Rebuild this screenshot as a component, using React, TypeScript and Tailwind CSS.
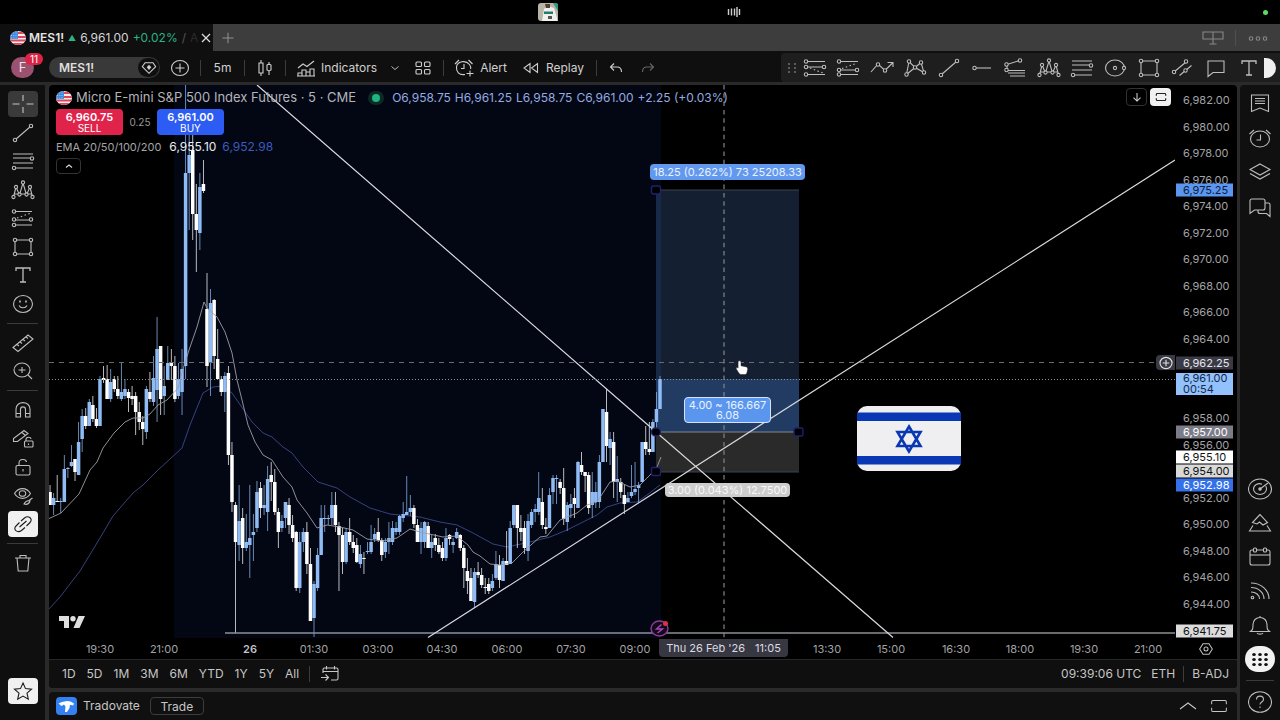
import type { ReactNode } from "react";

// [high, body top, body bottom, low, rising] in plot coordinates, one per 5 minute bar
type Bar = [number, number, number, number, 0 | 1];

const BAR_START = 50;
const BAR_STEP = 3.567;

const BARS: Bar[] = [
  [485, 492, 505, 505, 0], [493, 498, 505, 515, 1], [475, 501, 502, 502, 0], [498, 501, 502, 513, 1],
  [455, 469, 502, 502, 1], [467, 468, 469, 478, 1], [445, 462, 466, 467, 1], [459, 459, 472, 481, 0],
  [422, 442, 475, 475, 1], [409, 416, 439, 452, 1], [408, 416, 426, 429, 0], [399, 402, 426, 426, 1],
  [396, 405, 419, 422, 0], [408, 419, 426, 428, 0], [376, 379, 426, 426, 1], [366, 378, 380, 383, 0],
  [365, 379, 399, 399, 0], [369, 382, 399, 402, 1], [376, 379, 389, 392, 0], [376, 389, 396, 399, 0],
  [363, 392, 399, 401, 1], [379, 389, 396, 399, 1], [389, 392, 398, 412, 0], [386, 396, 399, 405, 0],
  [392, 396, 412, 435, 0], [402, 412, 422, 430, 0], [416, 422, 429, 445, 0], [386, 389, 432, 439, 1],
  [372, 392, 399, 402, 0], [356, 378, 402, 406, 1], [317, 349, 390, 422, 1], [346, 346, 399, 415, 0],
  [366, 386, 396, 415, 1], [346, 363, 380, 380, 1], [349, 363, 366, 380, 0], [356, 366, 399, 402, 0],
  [363, 379, 396, 399, 1], [349, 369, 392, 415, 1], [85, 173, 366, 379, 1], [135, 155, 173, 230, 1],
  [135, 150, 214, 240, 0], [184, 214, 230, 272, 0], [173, 187, 233, 250, 1], [160, 184, 191, 193, 0],
  [273, 309, 366, 387, 0], [289, 303, 363, 396, 1], [299, 300, 356, 369, 0], [329, 359, 379, 379, 0],
  [376, 379, 392, 396, 0], [372, 376, 392, 412, 1], [366, 373, 455, 465, 0], [442, 455, 502, 512, 0],
  [502, 505, 542, 633, 0], [485, 521, 545, 561, 1], [508, 518, 548, 564, 0], [514, 542, 548, 551, 1],
  [485, 538, 545, 578, 1], [514, 532, 535, 561, 1], [481, 492, 528, 532, 1], [482, 488, 508, 518, 0],
  [485, 505, 508, 515, 1], [466, 479, 512, 531, 1], [462, 475, 482, 501, 0], [469, 482, 512, 515, 0],
  [508, 512, 532, 548, 0], [515, 521, 528, 532, 1], [502, 502, 518, 528, 1], [498, 505, 525, 534, 0],
  [515, 525, 538, 542, 0], [531, 532, 588, 591, 0], [532, 542, 588, 593, 1], [528, 532, 542, 552, 1],
  [522, 532, 564, 574, 0], [548, 564, 621, 621, 0], [581, 584, 618, 637, 1], [548, 555, 588, 591, 1],
  [505, 518, 555, 555, 1], [505, 518, 519, 532, 1], [515, 518, 519, 525, 1], [492, 505, 518, 525, 1],
  [492, 505, 525, 532, 0], [522, 526, 535, 591, 0], [528, 535, 562, 574, 0], [528, 532, 562, 564, 1],
  [518, 532, 542, 545, 0], [535, 542, 548, 553, 0], [538, 545, 562, 563, 0], [545, 554, 564, 568, 1],
  [552, 558, 559, 574, 0], [542, 551, 552, 554, 1], [525, 542, 552, 554, 1], [528, 534, 539, 542, 1],
  [518, 532, 540, 542, 0], [538, 540, 555, 561, 0], [538, 542, 552, 558, 1], [522, 538, 542, 554, 1],
  [521, 528, 542, 545, 1], [522, 528, 532, 535, 1], [515, 516, 532, 535, 1], [502, 514, 518, 522, 1],
  [476, 512, 515, 515, 1], [495, 508, 512, 516, 1], [505, 508, 524, 528, 0], [519, 525, 542, 542, 0],
  [522, 528, 542, 554, 1], [521, 522, 542, 548, 1], [522, 526, 548, 548, 0], [535, 542, 548, 558, 1],
  [534, 538, 545, 551, 0], [538, 545, 552, 554, 0], [542, 548, 558, 561, 0], [528, 538, 558, 561, 1],
  [534, 535, 539, 545, 0], [538, 542, 545, 553, 1], [528, 532, 538, 539, 1], [534, 535, 548, 551, 0],
  [545, 548, 568, 588, 0], [558, 571, 581, 594, 0], [568, 578, 601, 601, 0], [568, 572, 602, 608, 1],
  [562, 572, 575, 578, 0], [568, 575, 585, 588, 0], [578, 587, 588, 594, 0], [578, 584, 591, 594, 0],
  [574, 581, 588, 591, 1], [551, 564, 578, 580, 1], [555, 565, 580, 588, 0], [558, 561, 581, 581, 1],
  [531, 561, 565, 565, 0], [521, 528, 564, 564, 1], [505, 505, 525, 528, 1], [505, 505, 528, 548, 0],
  [515, 528, 532, 541, 0], [521, 528, 548, 554, 0], [514, 521, 551, 561, 1], [509, 512, 525, 528, 1],
  [504, 509, 512, 522, 1], [472, 498, 512, 515, 1], [488, 502, 525, 529, 0], [518, 527, 529, 534, 0],
  [488, 495, 528, 528, 1], [475, 478, 492, 504, 1], [475, 478, 479, 504, 1], [479, 482, 488, 494, 0],
  [468, 488, 519, 525, 0], [502, 505, 522, 531, 1], [494, 504, 508, 518, 1], [488, 498, 504, 518, 0],
  [461, 462, 508, 508, 1], [452, 465, 472, 475, 0], [472, 472, 476, 492, 0], [472, 475, 508, 514, 0],
  [472, 492, 505, 518, 1], [482, 492, 502, 508, 1], [455, 462, 502, 508, 1], [409, 409, 462, 462, 1],
  [389, 412, 446, 462, 0], [432, 439, 448, 465, 1], [432, 442, 482, 498, 0], [456, 479, 482, 502, 1],
  [478, 482, 492, 498, 0], [485, 495, 504, 514, 0], [492, 498, 502, 502, 1], [465, 492, 496, 498, 1],
  [462, 489, 492, 495, 1], [482, 485, 488, 503, 1], [442, 442, 482, 482, 1], [426, 442, 449, 455, 0],
  [422, 449, 452, 455, 0], [419, 422, 452, 452, 1], [392, 409, 422, 428, 1], [376, 379, 409, 409, 1],
];

const EMA_FAST =
  "48,519 61,513 79,494 90,470 97,462 103,448 114,433 125,422 133,418 143,418 150,414 158,405 167,400 178,388 184,366 189,350 197,327 204,302 207,308 217,317 225,332 232,353 237,380 242,400 248,425 255,442 263,455 272,460 283,477 292,487 297,500 307,513 317,528 327,525 340,527 353,530 367,539 383,541 397,538 410,529 420,532 443,537 457,536 468,545 473,552 480,556 490,564 500,565 512,563 523,552 540,537 547,536 560,520 577,513 587,505 597,502 610,482 617,481 630,487 640,485 650,475 657,467 661,457";
const EMA_SLOW =
  "48,610 60,597 80,571 100,538 113,516 133,493 143,485 158,470 182,448 190,425 203,393 213,387 222,386 232,393 241,406 252,422 263,433 272,437 283,447 292,453 303,467 318,482 337,488 350,497 370,508 390,514 420,517 440,522 457,525 473,533 493,544 507,547 530,542 550,537 567,530 583,522 597,515 607,507 620,503 637,502 647,495 660,485";

const PLOT_LEFT = 49;
const PLOT_TOP = 85;

const priceToTop = (price: number) => 100 + (6982 - price) * 13.25 - PLOT_TOP;

const PRICES = [
  6982, 6980, 6978, 6976, 6974, 6972, 6970, 6968, 6966, 6964, 6958, 6956, 6952, 6950, 6948, 6946, 6944,
];

const PRICE_TAGS = [
  { price: 6975.25, top: 105, style: "bg-[#5b96f0] text-[#0b1c3a]" },
  { price: 6962.25, top: 278, style: "bg-[#3a3a46] text-[#e6e6ea]" },
  { price: 6957, top: 347, style: "bg-[#7c7c88] text-white" },
  { price: 6955.1, top: 372, style: "bg-white text-[#111]" },
  { price: 6954, top: 386, style: "bg-[#d9d9d9] text-[#111]" },
  { price: 6952.98, top: 400, style: "bg-[#3471e8] text-white" },
  { price: 6941.75, top: 546, style: "bg-[#dcdcdc] text-[#111]" },
];

const TIMES: [string, number][] = [
  ["19:30", 51], ["21:00", 115], ["26", 201], ["01:30", 265], ["03:00", 329], ["04:30", 393],
  ["06:00", 458], ["07:30", 522], ["09:00", 586], ["13:30", 778], ["15:00", 842], ["16:30", 907],
  ["18:00", 971], ["19:30", 1035], ["21:00", 1099],
];

const RANGES = ["1D", "5D", "1M", "3M", "6M", "YTD", "1Y", "5Y", "All"];

const fmt = (n: number) =>
  n.toLocaleString("en-US", { minimumFractionDigits: 2, maximumFractionDigits: 2 });

function Icon({ children, className = "h-6 w-6" }: { children: ReactNode; className?: string }) {
  return (
    <svg
      viewBox="0 0 24 24"
      className={`shrink-0 ${className}`}
      fill="none"
      stroke="currentColor"
      strokeWidth="1.1"
      aria-hidden="true"
    >
      {children}
    </svg>
  );
}

function Dots({ points, r = 1.7 }: { points: [number, number][]; r?: number }) {
  return (
    <>
      {points.map(([x, y]) => (
        <circle key={`${x}-${y}`} cx={x} cy={y} r={r} className="fill-[#141414]" />
      ))}
    </>
  );
}

const icons = {
  cross: <path d="M12 3v6M12 15v6M1.500 12h7M15.500 12h7" />,
  trend: (
    <>
      <path d="M4.500 18.500 19.500 5.500" />
      <Dots points={[[4, 19], [20, 5]]} />
    </>
  ),
  horizRay: (
    <>
      <path d="M5 12h16" />
      <Dots points={[[4.500, 12]]} />
    </>
  ),
  fib: (
    <>
      <path d="M2 5h20M2 9h17M2 14h20M5 19h17" />
      <Dots points={[[21, 9.500], [3, 19]]} />
    </>
  ),
  elliott: (
    <>
      <path d="M2.500 19 5 9l3.500 8L12 5l3.500 12L19 9l2.500 10M3 16h18" />
      <Dots points={[[12, 4.500], [5, 9], [19, 9], [2.500, 19], [21.500, 19], [8.500, 16.500], [15.500, 16.500]]} r={1.6} />
    </>
  ),
  forecast: (
    <>
      <path d="M4 5.500h17M4 14h17M4 19h17" />
      <path d="m6 12 14-5" strokeDasharray="1.500 2.500" />
      <Dots points={[[3, 5.500], [3, 13.500], [20, 13.500], [3, 19]]} />
    </>
  ),
  longPos: (
    <>
      <path d="M4 5.500h18M4 11h16M4 18.500h18" />
      <path d="m7 12 13 5" strokeDasharray="1.500 2.500" />
      <Dots points={[[3, 5.500], [3, 11], [21, 11], [3, 18.500]]} />
    </>
  ),
  shortPos: (
    <>
      <path d="M4 5.500h18M4 14h16M4 18.500h18" />
      <path d="m6 12.500 14-5" strokeDasharray="1.500 2.500" />
      <Dots points={[[3, 5.500], [3, 14], [21, 14], [3, 18.500]]} />
    </>
  ),
  arrowPath: (
    <>
      <path d="m1 16 7-8 7 6.500L22.500 7M17.500 6.500h5.500V11" />
      <Dots points={[[8, 8.500], [15, 14.500]]} />
    </>
  ),
  pattern: (
    <>
      <path d="M3.500 18.500 6 5.500l6 6 6-5 3 10-9-5-8.500 7" />
      <Dots points={[[3.500, 18.500], [6, 5.500], [12, 11.500], [18, 6.500], [21, 16.500]]} />
    </>
  ),
  fan: (
    <>
      <path d="M4 8.500 16.500 4.500M4 9v5M4 14.500h18M5 17h17M7 20h15" />
      <Dots points={[[17, 4.500], [3.500, 8.500], [3.500, 14]]} />
    </>
  ),
  ellipse: (
    <>
      <ellipse cx="12" cy="12" rx="9.500" ry="8" />
      <Dots points={[[12, 12], [21, 12]]} r={1.6} />
    </>
  ),
  rect: (
    <>
      <path d="M4 5h16v14H4z" />
      <Dots points={[[4, 5], [20, 5], [4, 19], [20, 19]]} />
    </>
  ),
  channel: (
    <>
      <path d="m4 16 12-10M9.500 19.500 21.500 9.500" />
      <Dots points={[[4, 16], [16, 5.500], [15.500, 14.500]]} />
    </>
  ),
  comment: <path d="M4 5h16v11.500H9L4 20.500z" />,
  text: <path d="M5 8V5h14v3M12 5v14M9 19h6" strokeWidth="1.300" />,
  smile: (
    <>
      <ellipse cx="12" cy="12" rx="9.500" ry="8.500" />
      <path d="M8 13.500c1.500 3 6.500 3 8 0" />
      <path d="M9 8.500v2M15 8.500v2" strokeWidth="1.600" />
    </>
  ),
  ruler: <path d="m2 16.500 15-12.500 5 4-15 12.500zM6 13.500l2 1.500M9 11l2 1.500M12 8.500l2 1.500M15 6l2 1.500" />,
  zoomIn: (
    <>
      <ellipse cx="11" cy="11" rx="8" ry="7" />
      <path d="m17 16 4 4M11 8v6M7.500 11h7" />
    </>
  ),
  magnet: (
    <path d="M5 19v-8c0-8.500 14-8.500 14 0v8h-4.500v-7.500c0-3.500-5-3.500-5 0V19zM5 15.500h4.500M14.500 15.500H19" />
  ),
  pencilLock: (
    <>
      <path d="M2.500 14.500v-3L13 3.500l4 3-10.500 8zM11 5.500l3.500 3" />
      <rect x="13.500" y="14" width="8.500" height="6" rx="1" />
      <path d="M15 14v-1.500c0-3 5-3 5-.5M17.500 16.500v1.500" />
    </>
  ),
  lock: (
    <>
      <rect x="5" y="10.500" width="14" height="9.500" rx="1.500" />
      <path d="M8 10.500V8c0-4.500 7-4.500 7.500-1M12 14v2.500" />
    </>
  ),
  eye: (
    <>
      <path d="M3.500 9.500c4-6.500 12-6.500 16 0-4 6.500-12 6.500-16 0z" />
      <ellipse cx="11.500" cy="9.500" rx="3.200" ry="2.800" />
      <path d="M13 20c1.500-3 3-4 6-3-1 3-3 4-6 3zM18 16.500l3.500-2.500" />
    </>
  ),
  link: (
    <path d="m10 9 3.500-3c4-3.200 9 1 5.500 4.500L15.500 14M14 15.500 10.500 18.500c-4 3-9-1-5.500-4.500L8.500 10.500M8.500 15l7-6" />
  ),
  trash: <path d="M4 7h16M6 7l1.200 13h9.600L18 7M9 7V4.500h6V7" />,
  star: <path d="m12 4 2.500 5.600 6 .6-4.500 4 1.300 6L12 17.100l-5.300 3.100 1.300-6-4.500-4 6-.6z" />,
  list: <path d="M3.500 4h17v16.500L12 17l-8.500 3.500zM7 7.500h10M7 10h10M7 12.500h10" />,
  clock: (
    <>
      <ellipse cx="12" cy="13" rx="9.500" ry="8" />
      <path d="M12.500 8.500v5.500H8.500M1.500 8 6 4M22.500 8 18 4" />
    </>
  ),
  layers: <path d="m12 4 10 5.500-10 5.500L2 9.500zM2 13.500 12 19l10-5.500" />,
  chat: (
    <path d="M4 4h11c1.500 0 2 .5 2 2v7c0 1.500-.5 2-2 2H6.500L2 18.500V6c0-1.500.5-2 2-2zM17 8h3.500c1 0 1.500.5 1.500 1.500v12L18.500 18.500H12c-1.500 0-2-.5-2-2V15.500" />
  ),
  radar: (
    <>
      <ellipse cx="12" cy="12" rx="11.500" ry="10" />
      <path d="M14 7.200c-4-1.800-8.500 1-8.500 4.800 0 3 3 5.500 6.500 5.500s6.500-2.500 6.500-5.500c0-1-.2-2-.8-2.800M12 12l8-6" />
      <circle cx="12" cy="12" r="1.200" className="fill-current" />
    </>
  ),
  peaks: <path d="m12 3.500-7.500 8 4.500 1.500 2.500-2 3.500 3 4.500-2.500zM5 14.500l-3.500 5.500h21L19 14.500" />,
  calendar: (
    <>
      <rect x="2" y="5" width="20" height="15" rx="2" />
      <path d="M2 10h20" />
      <rect x="5.500" y="3" width="3" height="4" rx="1" className="fill-[#101010]" />
      <rect x="15.500" y="3" width="3" height="4" rx="1" className="fill-[#101010]" />
    </>
  ),
  feed: (
    <>
      <path d="M3 4c10 0 18 7 18 16M3 8.500c7.500 0 13 5 13 11.500M3 13c5 0 8.500 3 8.500 7" />
      <circle cx="4.500" cy="18.500" r="1.300" />
    </>
  ),
  bell: <path d="M2.500 18.500h19c-2.500-2-2.500-3-2.500-7 0-4-3-7-7-7s-7 3-7 7c0 4 0 5-2.500 7zM9 20c1 1.500 5 1.500 6 0M12 4.500V3" />,
  help: (
    <>
      <ellipse cx="12" cy="12" rx="11.500" ry="10.300" />
      <path d="M8.500 9.500c0-4.500 7-4.500 7 0 0 2.500-3.500 2.500-3.500 5M12 16.500v1.500" />
    </>
  ),
  frame: <path d="M4 10V7.500C4 6.500 4.500 6 5.500 6h13c1 0 1.500.5 1.500 1.500V10M4 14v2.500c0 1 .5 1.500 1.500 1.500h13c1 0 1.500-.5 1.500-1.500V14" />,
  chevronUp: <path d="m4 15 8-6 8 6" />,
};

type IconName = keyof typeof icons;

function ToolButton({ name, label, active }: { name: IconName; label: string; active?: "dim" | "light" }) {
  const look =
    active === "dim"
      ? "bg-[#3a3a3a] text-[#c4c4c4]"
      : active === "light"
        ? "bg-[#f0f0f0] text-[#1a1a1a]"
        : "text-[#bdbdbd]";
  return (
    <button aria-label={label} className={`flex h-[26px] w-[30px] items-center justify-center rounded ${look}`}>
      <Icon>{icons[name]}</Icon>
    </button>
  );
}

function Separator() {
  return <div className="h-4 w-px shrink-0 bg-[#3c3c3c]" />;
}

function UsFlag() {
  return (
    <svg viewBox="0 0 16 14" className="h-[14px] w-4 shrink-0" aria-hidden="true">
      <clipPath id="us-round">
        <ellipse cx="8" cy="7" rx="8" ry="7" />
      </clipPath>
      <g clipPath="url(#us-round)">
        <path d="M0 0h16v14H0z" fill="#f1f1f1" />
        <path d="M0 1h16v2H0zM0 5h16v2H0zM0 8.500h16v2H0zM0 12h16v2H0z" fill="#e0465a" />
        <path d="M0 0h8v8H0z" fill="#3c8be0" />
        <path d="M1 2h7M1 4.500h7M1 7h7" stroke="#bcd9f7" strokeWidth=".8" strokeDasharray="1 1.300" />
      </g>
    </svg>
  );
}

function StatusBar() {
  return (
    <div className="grid h-6 grid-cols-3 items-center bg-black px-2">
      <div />
      <div className="flex items-center justify-center">
        <svg viewBox="0 0 20 18" className="mr-[169px] h-[18px] w-5 shrink-0" aria-hidden="true">
          <rect width="20" height="18" rx="3" fill="#b9b4a8" />
          <path d="M4 18 6 6l4-3 6 2 4 13z" fill="#f0f0ec" />
          <path d="M15 0h3a2 2 0 0 1 2 2v6z" fill="#2c9a86" />
          <path d="M7 1h5v4H8z" fill="#5a3a36" />
          <path d="M6 8.500h9v2.500H6z" fill="#1f7a70" />
          <path d="M10 13h4v3h-4z" fill="#555" />
        </svg>
        <svg viewBox="0 0 14 12" className="h-3 w-[14px] shrink-0" stroke="#cfcfcf" strokeWidth="1.400" aria-hidden="true">
          <path d="M1.500 3v6M4.500 2.500v7M7.500 2.500v7M10 1v10M12.500 3v6" />
        </svg>
      </div>
      <div className="mr-1 h-[5px] w-[5px] justify-self-end rounded-full bg-[#5ddc62]" />
    </div>
  );
}

function TabBar() {
  return (
    <div className="flex h-[27px] items-center bg-[#3d3d3d]">
      <div className="flex h-full w-[213px] items-center bg-[#0f0f0f] pr-1 pl-2.5 text-[12px]">
        <UsFlag />
        <span className="ml-[3px] font-semibold text-[#e4e4e4]">MES1!</span>
        <span className="ml-1 text-[8px] text-[#2bb385]">▲</span>
        <span className="ml-1 text-[#d6d6d6]">6,961.00</span>
        <span className="ml-1 text-[#2bb385]">+0.02%</span>
        <span className="ml-1 text-[#555]">/</span>
        <span className="ml-1 text-[#2b2b2b]">A</span>
        <button aria-label="Close tab" className="ml-auto text-[#e0e0e0]">
          <Icon className="h-4 w-4">
            <path d="m6 6 12 12M18 6 6 18" strokeWidth="1.800" />
          </Icon>
        </button>
      </div>
      <button aria-label="New tab" className="ml-1.5 text-[#909090]">
        <Icon className="h-[18px] w-[18px]">
          <path d="M12 5v14M4.500 12h15" strokeWidth="1.400" />
        </Icon>
      </button>
      <div className="ml-auto flex items-center gap-2.5 pr-2.5 text-[#888]">
        <button aria-label="Layout">
          <Icon>
            <path d="M2 6h20v7H2zM12 6v12M8.500 18h7M2 6" />
          </Icon>
        </button>
        <div className="h-4 w-px bg-[#505050]" />
        <button aria-label="More">
          <Icon>
            <circle cx="5" cy="12.500" r="1.800" />
            <circle cx="12" cy="12.500" r="1.800" />
            <circle cx="19" cy="12.500" r="1.800" />
          </Icon>
        </button>
      </div>
    </div>
  );
}

const FAVORITES: [IconName, string][] = [
  ["longPos", "Long position"], ["shortPos", "Short position"], ["arrowPath", "Path"], ["pattern", "XABCD pattern"],
  ["trend", "Trend line"], ["horizRay", "Horizontal ray"], ["fan", "Trend-based fib"], ["elliott", "Elliott wave"],
  ["fib", "Fib retracement"], ["ellipse", "Ellipse"], ["rect", "Rectangle"], ["channel", "Parallel channel"],
  ["comment", "Comment"], ["text", "Text"],
];

function Toolbar() {
  return (
    <header className="flex h-[31px] items-center bg-[#0f0f0f] pt-[2px] pl-[11px] text-[12px] text-[#cfcfcf]">
      <button aria-label="Account" className="relative flex h-[21px] w-[23px] items-center justify-center rounded-full bg-[#9b5270] text-[13px] text-[#f0dfe6]">
        F
        <span className="absolute -top-[4px] left-[14px] flex h-3 w-[18px] items-center justify-center rounded-full bg-[#dc2345] text-[10px] text-white">
          11
        </span>
      </button>
      <div className="ml-[15px] flex h-[21px] w-[111px] items-center justify-between rounded-full bg-[#393939] pr-px pl-2.5">
        <button className="font-semibold text-[#dedede]">MES1!</button>
        <button aria-label="Premium" className="flex h-[19px] w-[21px] items-center justify-center rounded-full bg-[#0f0f0f]">
          <Icon className="h-4 w-4">
            <path d="M6 4h12l4 6-10 10L2 10z" strokeWidth="1.600" />
            <path d="m12 7 3.500 4-3.500 4-3.500-4z" className="fill-current" stroke="none" />
          </Icon>
        </button>
      </div>
      <button aria-label="Compare" className="mx-2">
        <Icon>
          <ellipse cx="12" cy="12" rx="8.500" ry="7.500" />
          <path d="M12 7.500v9M7.500 12h9" />
        </Icon>
      </button>
      <Separator />
      <button className="w-[43px] text-center">5m</button>
      <Separator />
      <button aria-label="Candles" className="mx-2">
        <Icon>
          <path d="M8 4v3M8 17v3M16 6v3M16 15v4M6 7h4v10H6zM14 9l2-1 2 1v5l-2 1-2-1z" />
        </Icon>
      </button>
      <Separator />
      <button className="ml-2 flex items-center gap-[3px]">
        <Icon>
          <path d="M4 20v-3h4v3M8 20v-6h4v6M12 20v-4h4v4M16 20v-7h4v7M3 20h18M4 12l5-4 4 2.500L20 5" />
        </Icon>
        Indicators
      </button>
      <button aria-label="Favorite indicators" className="ml-3">
        <Icon className="h-3 w-3">
          <path d="m5 9 7 6 7-6" strokeWidth="1.800" />
        </Icon>
      </button>
      <button aria-label="Templates" className="mr-2 ml-2.5">
        <Icon>
          <rect x="5" y="6" width="5.500" height="4.500" rx="1" />
          <rect x="13.500" y="6" width="5.500" height="4.500" rx="1" />
          <rect x="5" y="13.500" width="5.500" height="4.500" rx="1" />
          <rect x="13.500" y="13.500" width="5.500" height="4.500" rx="1" />
        </Icon>
      </button>
      <Separator />
      <button className="ml-2 flex items-center gap-1">
        <Icon>
          <path d="M13 18.500C7 19.500 4 15.500 4.500 11c.6-5.500 9-7.500 13-2.500 1 1.500 1.500 3 1.200 4.500M12 8v4.500H9M3 8l4-4M20.500 8l-4-4M18 14.500v6M14.500 17.500h7" />
        </Icon>
        Alert
      </button>
      <button className="ml-3 flex items-center gap-[3px]">
        <Icon>
          <path d="M11 7.500v9L5 12zM18.500 7.500v9l-6-4.500z" />
        </Icon>
        Replay
      </button>
      <div className="ml-3 flex items-center">
        <Separator />
      </div>
      <button aria-label="Undo" className="ml-[7px]">
        <Icon>
          <path d="M10 7.500 6.500 11l3.500 3.500M6.500 11H13c3 0 4.500 1.500 4.500 5" />
        </Icon>
      </button>
      <button aria-label="Redo" className="ml-2 text-[#666]">
        <Icon>
          <path d="m14 7.500 3.500 3.500-3.500 3.500M17.500 11H11c-3 0-4.500 1.500-4.500 5" />
        </Icon>
      </button>
      <div className="ml-auto flex h-full items-center rounded-l bg-[#1e1e1e] pl-[7px] text-[#bdbdbd]">
        <svg viewBox="0 0 8 10" className="mr-1 h-2.5 w-2 fill-[#5c5c5c]" aria-hidden="true">
          {[0, 4, 8].map((y) => (
            <path key={y} d={`M0 ${y}h2v2H0zM6 ${y}h2v2H6z`} />
          ))}
        </svg>
        <div className="flex w-[464px] justify-between">
          {FAVORITES.map(([name, label]) => (
            <ToolButton key={label} name={name} label={label} />
          ))}
        </div>
        <div className="mr-1 h-5 w-3 rounded-r-full bg-[#efefef]" />
      </div>
    </header>
  );
}

function DrawingBar() {
  return (
    <aside className="flex w-[45px] shrink-0 flex-col items-center bg-[#0f0f0f] pt-1.5 pb-4">
      <div className="flex h-[226px] flex-col justify-between">
        <ToolButton name="cross" label="Cross" active="dim" />
        <ToolButton name="trend" label="Trend line" />
        <ToolButton name="fib" label="Fib retracement" />
        <ToolButton name="elliott" label="Patterns" />
        <ToolButton name="forecast" label="Forecasting" />
        <ToolButton name="rect" label="Shapes" />
        <ToolButton name="text" label="Text" />
        <ToolButton name="smile" label="Icons" />
      </div>
      <div className="my-1.5 h-px w-[31px] bg-[#3a3a3a]" />
      <div className="flex flex-col gap-[2px]">
        <ToolButton name="ruler" label="Measure" />
        <ToolButton name="zoomIn" label="Zoom in" />
      </div>
      <div className="my-1.5 h-px w-[31px] bg-[#3a3a3a]" />
      <div className="flex h-[140px] flex-col justify-between">
        <ToolButton name="magnet" label="Magnet" />
        <ToolButton name="pencilLock" label="Stay in drawing mode" />
        <ToolButton name="lock" label="Lock drawings" />
        <ToolButton name="eye" label="Hide drawings" />
        <ToolButton name="link" label="Sync drawings" active="light" />
      </div>
      <div className="my-1.5 h-px w-[31px] bg-[#3a3a3a]" />
      <ToolButton name="trash" label="Remove" />
      <div className="mt-auto">
        <ToolButton name="star" label="Favorites toolbar" active="light" />
      </div>
    </aside>
  );
}

function SideButton({ name, label }: { name: IconName; label: string }) {
  return (
    <button aria-label={label} className="flex h-[34px] w-[34px] items-center justify-center text-[#bdbdbd]">
      <Icon>{icons[name]}</Icon>
    </button>
  );
}

function WidgetBar() {
  return (
    <aside className="flex w-10 shrink-0 flex-col items-center rounded-tl bg-[#101010] pt-px pb-px">
      <div className="flex h-[138px] flex-col justify-between">
        <SideButton name="list" label="Watchlist" />
        <SideButton name="clock" label="Alerts" />
        <SideButton name="layers" label="Object tree" />
        <SideButton name="chat" label="Chats" />
      </div>
      <div className="mt-auto flex flex-col items-center">
        <SideButton name="radar" label="Screeners" />
        <SideButton name="peaks" label="Pine" />
        <SideButton name="calendar" label="Calendar" />
        <SideButton name="feed" label="News" />
        <SideButton name="bell" label="Notifications" />
        <button aria-label="Products" className="my-1 flex h-[26px] w-[30px] items-center justify-center rounded-full bg-[#f2f2f2]">
          <svg viewBox="0 0 16 13" className="h-[13px] w-4 fill-[#111]" aria-hidden="true">
            {[1.5, 6.5, 11.5].map((y) =>
              [2, 8, 14].map((x) => <ellipse key={`${x}-${y}`} cx={x} cy={y} rx="1.800" ry="1.500" />),
            )}
          </svg>
        </button>
        <div className="my-1 h-px w-7 bg-[#3a3a3a]" />
        <SideButton name="help" label="Help" />
      </div>
    </aside>
  );
}

function Candles() {
  return (
    <g>
      {BARS.map(([high, top, bottom, low, up], i) => {
        const x = BAR_START + i * BAR_STEP;
        return (
          <g key={i} fill={up ? "#8fbcf5" : "#ffffff"}>
            <rect x={x - 0.4} y={high} width="0.9" height={low - high} opacity="0.8" />
            <rect x={x - 1.7} y={top} width="3.500" height={Math.max(1, bottom - top)} />
          </g>
        );
      })}
    </g>
  );
}

function Drawings() {
  return (
    <svg className="absolute inset-0 h-full w-full" aria-label="MES1! 5 minute chart">
      <g transform={`translate(${-PLOT_LEFT} ${-PLOT_TOP})`}>
        <rect x="174" y="85" width="487" height="553" fill="#030714" />
        <rect x="656" y="190" width="143" height="242" fill="#142031" />
        <rect x="656" y="379" width="143" height="53" fill="#213b62" />
        <rect x="656" y="190" width="5" height="189" fill="#172b49" />
        <rect x="656" y="432" width="143" height="40" fill="#2a2a2a" />
        <path d="M656 190h143M656 472h143" stroke="#3a4350" />
        <path d="M656 432h143" stroke="#80868f" />
        <polyline points={EMA_SLOW} fill="none" stroke="#36427e" />
        <Candles />
        <polyline points={EMA_FAST} fill="none" stroke="#9d9da6" strokeWidth="0.9" />
        <path d="M225 633H1175" stroke="#8d9095" strokeWidth="1.500" />
        <path d="M257 85 656 432 893 637.500M428 637.500 1175 160" fill="none" stroke="#d8d8dc" strokeWidth="1.200" />
        <path d="M49 362.500H1175" stroke="#6b6b6b" strokeDasharray="5 5" />
        <path d="M49 379.500H1175" stroke="#8a8f96" strokeDasharray="1 2" />
        <path d="M724 85V638" stroke="#858585" strokeDasharray="4.500 3.800" strokeWidth="1.200" />
        <g fill="#000" stroke="#1f2270" strokeWidth="1.300">
          <rect x="651.500" y="186" width="9" height="8" rx="2" />
          <rect x="651.500" y="467.500" width="9" height="8" rx="2" />
          <rect x="651.500" y="428" width="9" height="8" rx="4" />
          <rect x="794" y="428" width="9" height="8" rx="2" />
        </g>
        <ellipse cx="659.500" cy="628.500" rx="8.500" ry="7.500" fill="#14091a" stroke="#8c3d9c" strokeWidth="1.400" />
        <path d="m661.500 624.500-5 4.500h6l-5 4" fill="none" stroke="#a24bb3" strokeWidth="1.400" />
        <circle cx="665.500" cy="623.500" r="2.500" fill="#dd2f45" />
      </g>
    </svg>
  );
}

function Legend() {
  return (
    <div className="absolute top-[2px] left-[7px] flex flex-col items-start text-[12px]">
      <div className="flex h-5 items-center pt-px">
        <UsFlag />
        <h1 className="ml-1 text-[13px] text-[#b4b4b8]">Micro E-mini S&amp;P 500 Index Futures · 5 · CME</h1>
        <span className="mr-2 ml-3 flex h-[14px] w-4 items-center justify-center rounded-full bg-[#0b2a22]">
          <span className="h-2 w-2 rounded-full bg-[#22b183]" />
        </span>
        <p className="flex gap-1 text-[#95abe0]">
          <span>O6,958.75</span>
          <span>H6,961.25</span>
          <span>L6,958.75</span>
          <span>C6,961.00</span>
          <span>+2.25 (+0.03%)</span>
        </p>
      </div>
      <div className="mt-[2px] flex items-center">
        <button className="h-[26px] w-[67px] rounded bg-[#e0234a] text-white">
          <span className="block text-[11px] leading-[12px] font-semibold">6,960.75</span>
          <span className="block text-[10px] leading-[10px]">SELL</span>
        </button>
        <span className="w-[34px] text-center text-[10px] text-[#9a9a9a]">0.25</span>
        <button className="h-[26px] w-[67px] rounded bg-[#2c5cf3] text-white">
          <span className="block text-[11px] leading-[12px] font-semibold">6,961.00</span>
          <span className="block text-[10px] leading-[10px]">BUY</span>
        </button>
      </div>
      <div className="mt-1 flex h-4 items-center">
        <span className="text-[11px] text-[#a5a5a8]">EMA 20/50/100/200</span>
        <span className="ml-2 text-[#ececec]">6,955.10</span>
        <span className="ml-1.5 text-[#3b5bbd]">6,952.98</span>
      </div>
      <button aria-label="Collapse legend" className="mt-[3px] flex h-4 w-[25px] items-center justify-center rounded-sm border border-[#333] text-[#d8d8d8]">
        <Icon className="h-3 w-3">
          <path d="m6 15 6-5 6 5" strokeWidth="2.200" />
        </Icon>
      </button>
    </div>
  );
}

function Sticker() {
  return (
    <svg viewBox="0 0 104 65" className="absolute top-[321px] left-[808px] h-[65px] w-[104px]" aria-label="Flag of Israel">
      <rect width="104" height="65" rx="10" fill="#efeff1" />
      <path d="M0 6.500h104V15H0zM0 50h104v8.500H0z" fill="#0a38b4" />
      <path d="M52 20.500 63.500 40h-23zM52 45.500 40.500 26h23z" fill="none" stroke="#0a38b4" strokeWidth="2.600" />
    </svg>
  );
}

function Plot() {
  return (
    <div className="relative min-w-0 flex-1 overflow-hidden">
      <Drawings />
      <Legend />
      <div className="absolute top-[79px] left-[601px] flex h-4 w-[155px] items-center justify-center rounded-sm bg-[#6299ee] text-[11px] whitespace-nowrap text-[#eaf2ff]">
        18.25 (0.262%) 73 25208.33
      </div>
      <div className="absolute top-[312px] left-[635px] flex h-[26px] w-[87px] flex-col items-center justify-center rounded border border-[#d5e4fb] bg-[#5b96ee] text-[11px] leading-[10px] whitespace-nowrap text-[#eaf2ff]">
        <span>4.00 ~ 166.667</span>
        <span>6.08</span>
      </div>
      <div className="absolute top-[398px] left-[616px] flex h-[14px] w-[125px] items-center justify-center rounded-sm bg-[#cdcdcd] text-[11px] whitespace-nowrap text-[#f8f8f8]">
        3.00 (0.043%) 12.7500
      </div>
      <Sticker />
      <svg viewBox="0 0 16 18" className="absolute top-[275px] left-[686px] h-[15px] w-[14px]" aria-hidden="true">
        <path
          d="M5 1c1.300 0 1.800.8 1.800 2v4l5.500 1c2 .4 2.700 1.500 2.500 3.200L14 15c-.4 1.700-1.500 2.500-3 2.500H7.500c-1.500 0-2.500-.7-3.300-2L1.300 11c-.8-1.600.7-2.600 2-1.300V3C3.300 1.800 3.800 1 5 1z"
          fill="#fff"
          stroke="#222"
          strokeWidth=".6"
        />
      </svg>
      <svg viewBox="0 0 26 12" className="absolute bottom-[10px] left-[10px] h-3 w-[26px] fill-[#dedede]" aria-label="TradingView">
        <path d="M0 0h10v12H5V5H0zM19.500 0H26l-5.500 12h-6z" />
        <circle cx="14" cy="2.700" r="2.700" />
      </svg>
      <div className="absolute top-[3px] right-1 flex gap-[3px]">
        <button aria-label="Scroll to price" className="flex h-[18px] w-[21px] items-center justify-center rounded border border-[#333] text-[#cfcfcf]">
          <Icon className="h-3.5 w-3.5">
            <path d="M12 5v14M6 13l6 6 6-6" strokeWidth="1.800" />
          </Icon>
        </button>
        <button aria-label="Maximize" className="flex h-[18px] w-[21px] items-center justify-center rounded bg-[#f1f1f1] text-[#222]">
          <Icon className="h-3.5 w-3.5">
            <g strokeWidth="2">{icons.frame}</g>
          </Icon>
        </button>
      </div>
      <button aria-label="Add order" className="absolute top-[270px] right-0 flex h-[15px] w-[19px] items-center justify-center rounded-l-sm bg-[#3a3a46] text-[#e0e0e0]">
        <Icon className="h-4 w-4">
          <ellipse cx="12" cy="12" rx="9" ry="8.500" strokeWidth="1.700" />
          <path d="M12 7v10M7 12h10" strokeWidth="1.700" />
        </Icon>
      </button>
    </div>
  );
}

function PriceAxis() {
  return (
    <div className="relative w-[62px] shrink-0 overflow-hidden text-[11px] leading-[13px]">
      {PRICES.map((price) => (
        <span key={price} className="absolute left-2 -translate-y-1/2 text-[#a3a3a6]" style={{ top: priceToTop(price) }}>
          {fmt(price)}
        </span>
      ))}
      {PRICE_TAGS.map(({ price, top, style }) => (
        <span key={price} className={`absolute left-px w-[57px] -translate-y-1/2 pl-[7px] ${style}`} style={{ top }}>
          {fmt(price)}
        </span>
      ))}
      <span className="absolute top-[288px] left-px w-[57px] bg-[#92c1fb] pl-[7px] leading-[11px] text-[#12294a]">
        6,961.00
        <br />
        00:54
      </span>
    </div>
  );
}

function TimeAxis() {
  return (
    <div className="relative h-[21px] overflow-hidden text-[11px] text-[#a3a3a6]">
      {TIMES.map(([label, left]) => (
        <span
          key={left}
          className={`absolute top-[3px] -translate-x-1/2 leading-4 ${label === "26" ? "font-semibold text-[#c4c4c8]" : ""}`}
          style={{ left }}
        >
          {label}
        </span>
      ))}
      <span className="absolute top-px left-[610px] flex h-[18px] w-[129px] items-center justify-center gap-2.5 rounded-b-sm bg-[#373742] whitespace-nowrap text-[#dcdce2]">
        <span>Thu 26 Feb '26</span>
        <span>11:05</span>
      </span>
      <button aria-label="Axis settings" className="absolute top-[3px] right-[23px] text-[#bdbdbd]">
        <Icon className="h-4 w-4">
          <path d="M7.500 4h9l5 8-5 8h-9l-5-8z" strokeWidth="1.600" />
          <circle cx="12" cy="12" r="3" strokeWidth="1.600" />
        </Icon>
      </button>
    </div>
  );
}

function RangeBar() {
  return (
    <div className="flex h-[29px] items-center border-t border-[#262626] bg-[#0f0f0f] pr-2 pl-[13px] text-[12px] text-[#c6c6c6]">
      <div className="flex gap-[11px]">
        {RANGES.map((range) => (
          <button key={range}>{range}</button>
        ))}
      </div>
      <div className="ml-2.5 flex items-center gap-2">
        <Separator />
        <button aria-label="Go to date">
          <Icon>
            <path d="M5 11V7.500C5 6.500 5.500 6 6.500 6h12c1 0 1.500.5 1.500 1.500v9c0 1-.5 1.500-1.500 1.500H13M5 9.500h15M8.500 4v3.500M16.500 4v3.500M3 15.500h7M7.500 12.500l3 3-3 3" />
          </Icon>
        </button>
      </div>
      <div className="ml-auto flex items-center">
        <button>09:39:06 UTC</button>
        <button className="ml-2.5">ETH</button>
        <div className="mx-2">
          <Separator />
        </div>
        <button>B-ADJ</button>
      </div>
    </div>
  );
}

function BrokerBar() {
  return (
    <footer className="flex h-7 items-center rounded-t bg-[#101010] px-[7px] text-[12px] text-[#c6c6c6]">
      <svg viewBox="0 0 21 18" className="h-[18px] w-[21px]" aria-hidden="true">
        <rect width="21" height="18" rx="4" fill="#3381f2" />
        <path d="M2.500 6.500 6 5l5-1 3.500.5 3.500 2-.8 2-3.200-.8-.5 3.300-2.500 4H9l.5-5.500-1.500-2L5.500 9z" fill="#fff" />
      </svg>
      <button className="ml-1.5">Tradovate</button>
      <button className="ml-2.5 h-[18px] w-[54px] rounded border border-[#3c3c3c]">Trade</button>
      <div className="ml-auto flex items-center gap-2">
        <button aria-label="Expand panel">
          <Icon>{icons.chevronUp}</Icon>
        </button>
        <button aria-label="Maximize panel">
          <Icon className="h-[22px] w-[22px]">{icons.frame}</Icon>
        </button>
      </div>
    </footer>
  );
}

export default function App() {
  return (
    <div className="flex min-h-screen flex-col overflow-hidden bg-[#2a2a2a] font-['Inter','Liberation_Sans',sans-serif]">
      <StatusBar />
      <TabBar />
      <Toolbar />
      <div className="mt-[3px] flex flex-1">
        <DrawingBar />
        <main className="mr-[3px] ml-1 flex min-w-0 flex-1 flex-col gap-1">
          <section className="flex flex-1 flex-col overflow-hidden rounded bg-black">
            <div className="flex min-h-[553px] flex-1">
              <Plot />
              <PriceAxis />
            </div>
            <TimeAxis />
            <RangeBar />
          </section>
          <BrokerBar />
        </main>
        <WidgetBar />
      </div>
    </div>
  );
}
